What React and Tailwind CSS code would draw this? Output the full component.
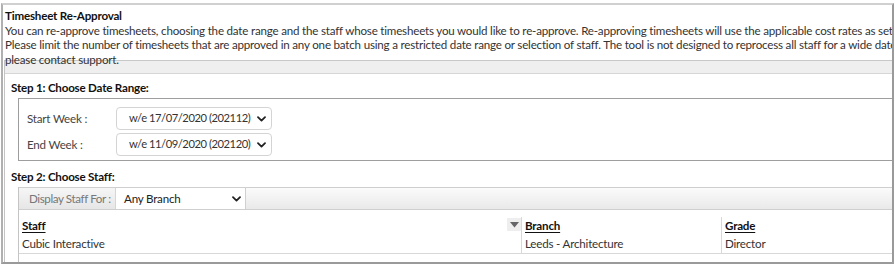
import React from "react";

function Chevron({ className = "" }) {
  return (
    <svg className={className} width="9" height="6" viewBox="0 0 9 6" fill="none">
      <path d="M1 1.2 L4.5 4.6 L8 1.2" stroke="#222" strokeWidth="1.8" strokeLinecap="round" strokeLinejoin="round" />
    </svg>
  );
}

function WeekSelect({ value }) {
  return (
    <div className="flex h-[23px] w-[156px] items-center justify-between rounded-[4px] border border-[#d4d4d4] bg-white pl-[12px] pr-[5px] text-[#333]">
      <span className="text-[11.2px] tracking-[-0.45px]">{value}</span>
      <Chevron />
    </div>
  );
}

export default function App() {
  return (
    <div className="relative h-[265px] w-[895px] overflow-hidden whitespace-nowrap bg-white font-['Lato',sans-serif] text-[11.6px] tracking-[-0.2px] text-[#333]">
      <div className="absolute left-[1px] top-[3px] h-[261px] w-[893px] border-t-2 border-l-2 border-r-2 border-b-2 border-t-[#d0d0d0] border-l-[#b0b0b0] border-r-[#9a9a9a] border-b-[#9a9a9a] overflow-hidden">
        <div className="relative z-10 h-[55px] pl-[2px] pt-[4px] leading-[14.5px]">
          <div className="font-bold text-[#111]">Timesheet Re-Approval</div>
          <div>You can re-approve timesheets, choosing the date range and the staff whose timesheets you would like to re-approve. Re-approving timesheets will use the applicable cost rates as set up in the system for each week selected.</div>
          <div>Please limit the number of timesheets that are approved in any one batch using a restricted date range or selection of staff. The tool is not designed to reprocess all staff for a wide date range. If you need to do this,</div>
          <div>please contact support.</div>
        </div>
        <div className="ml-[1px] h-full border-l border-[#c4c4c4]">
          <div className="h-[14px] border-t border-b border-t-[#c8c8c8] border-b-[#d6d6d6] bg-[#efefef]" />
          <div className="pl-[6px] pt-[6px]">
            <div className="font-bold leading-[15px] text-[#111]">Step 1: Choose Date Range:</div>
            <div className="ml-[7px] mt-[3px] w-[1000px] border border-[#9e9e9e] pb-[4px] pl-[8px] pt-[8px]">
              <div className="flex flex-col gap-[3px]">
                <div className="flex items-center">
                  <span className="w-[89px] text-[#444]">Start Week :</span>
                  <WeekSelect value="w/e 17/07/2020 (202112)" />
                </div>
                <div className="flex items-center">
                  <span className="w-[89px] text-[#444]">End Week :</span>
                  <WeekSelect value="w/e 11/09/2020 (202120)" />
                </div>
              </div>
            </div>
            <div className="mt-[8px] font-bold leading-[15px] text-[#111]">Step 2: Choose Staff:</div>
            <div className="ml-[7px] mt-[3px] h-[100px] w-[1000px] border-l border-[#c4c4c4]">
              <div className="flex h-[23px] items-stretch border-t border-b border-[#cfcfcf] bg-gradient-to-b from-[#fbfbfb] to-[#e9e9e9]">
                <div className="flex w-[97px] items-center border-r border-[#d6d6d6] bg-gradient-to-b from-[#f6f6f6] to-[#e6e6e6] pl-[10px] tracking-[-0.4px] text-[#777]">
                  Display Staff For :
                </div>
                <div className="flex w-[130px] items-center justify-between border-r border-[#d0d0d0] bg-white pl-[8px] pr-[4px]">
                  <span className="text-[#222]">Any Branch</span>
                  <Chevron />
                </div>
              </div>
              <div className="flex pt-[7px]">
                <div className="relative w-[502px]">
                  <div className="pl-[3px] pt-[1px] font-bold leading-[15px] text-[#111] underline underline-offset-2">Staff</div>
                  <div className="absolute right-0 top-[1px] flex h-[13px] w-[14px] items-center justify-center bg-[#eeeeee]">
                    <svg width="9" height="6" viewBox="0 0 9 6"><path d="M0 0 L9 0 L4.5 5.5 Z" fill="#666" /></svg>
                  </div>
                </div>
                <div className="w-[200px] border-l border-[#d8d8d8] pl-[3px] pt-[1px] font-bold leading-[15px] text-[#111] underline underline-offset-2">Branch</div>
                <div className="border-l border-[#d8d8d8] pl-[3px] pt-[1px] font-bold leading-[15px] text-[#111] underline underline-offset-2">Grade</div>
              </div>
              <div className="flex border-b border-[#d8d8d8] leading-[19px]">
                <div className="w-[502px] pl-[3px] pt-[1px]">Cubic Interactive</div>
                <div className="w-[200px] border-l border-[#d8d8d8] pl-[3px] pt-[1px]">Leeds - Architecture</div>
                <div className="border-l border-[#d8d8d8] pl-[3px] pt-[1px]">Director</div>
              </div>
            </div>
          </div>
        </div>
      </div>
    </div>
  );
}
